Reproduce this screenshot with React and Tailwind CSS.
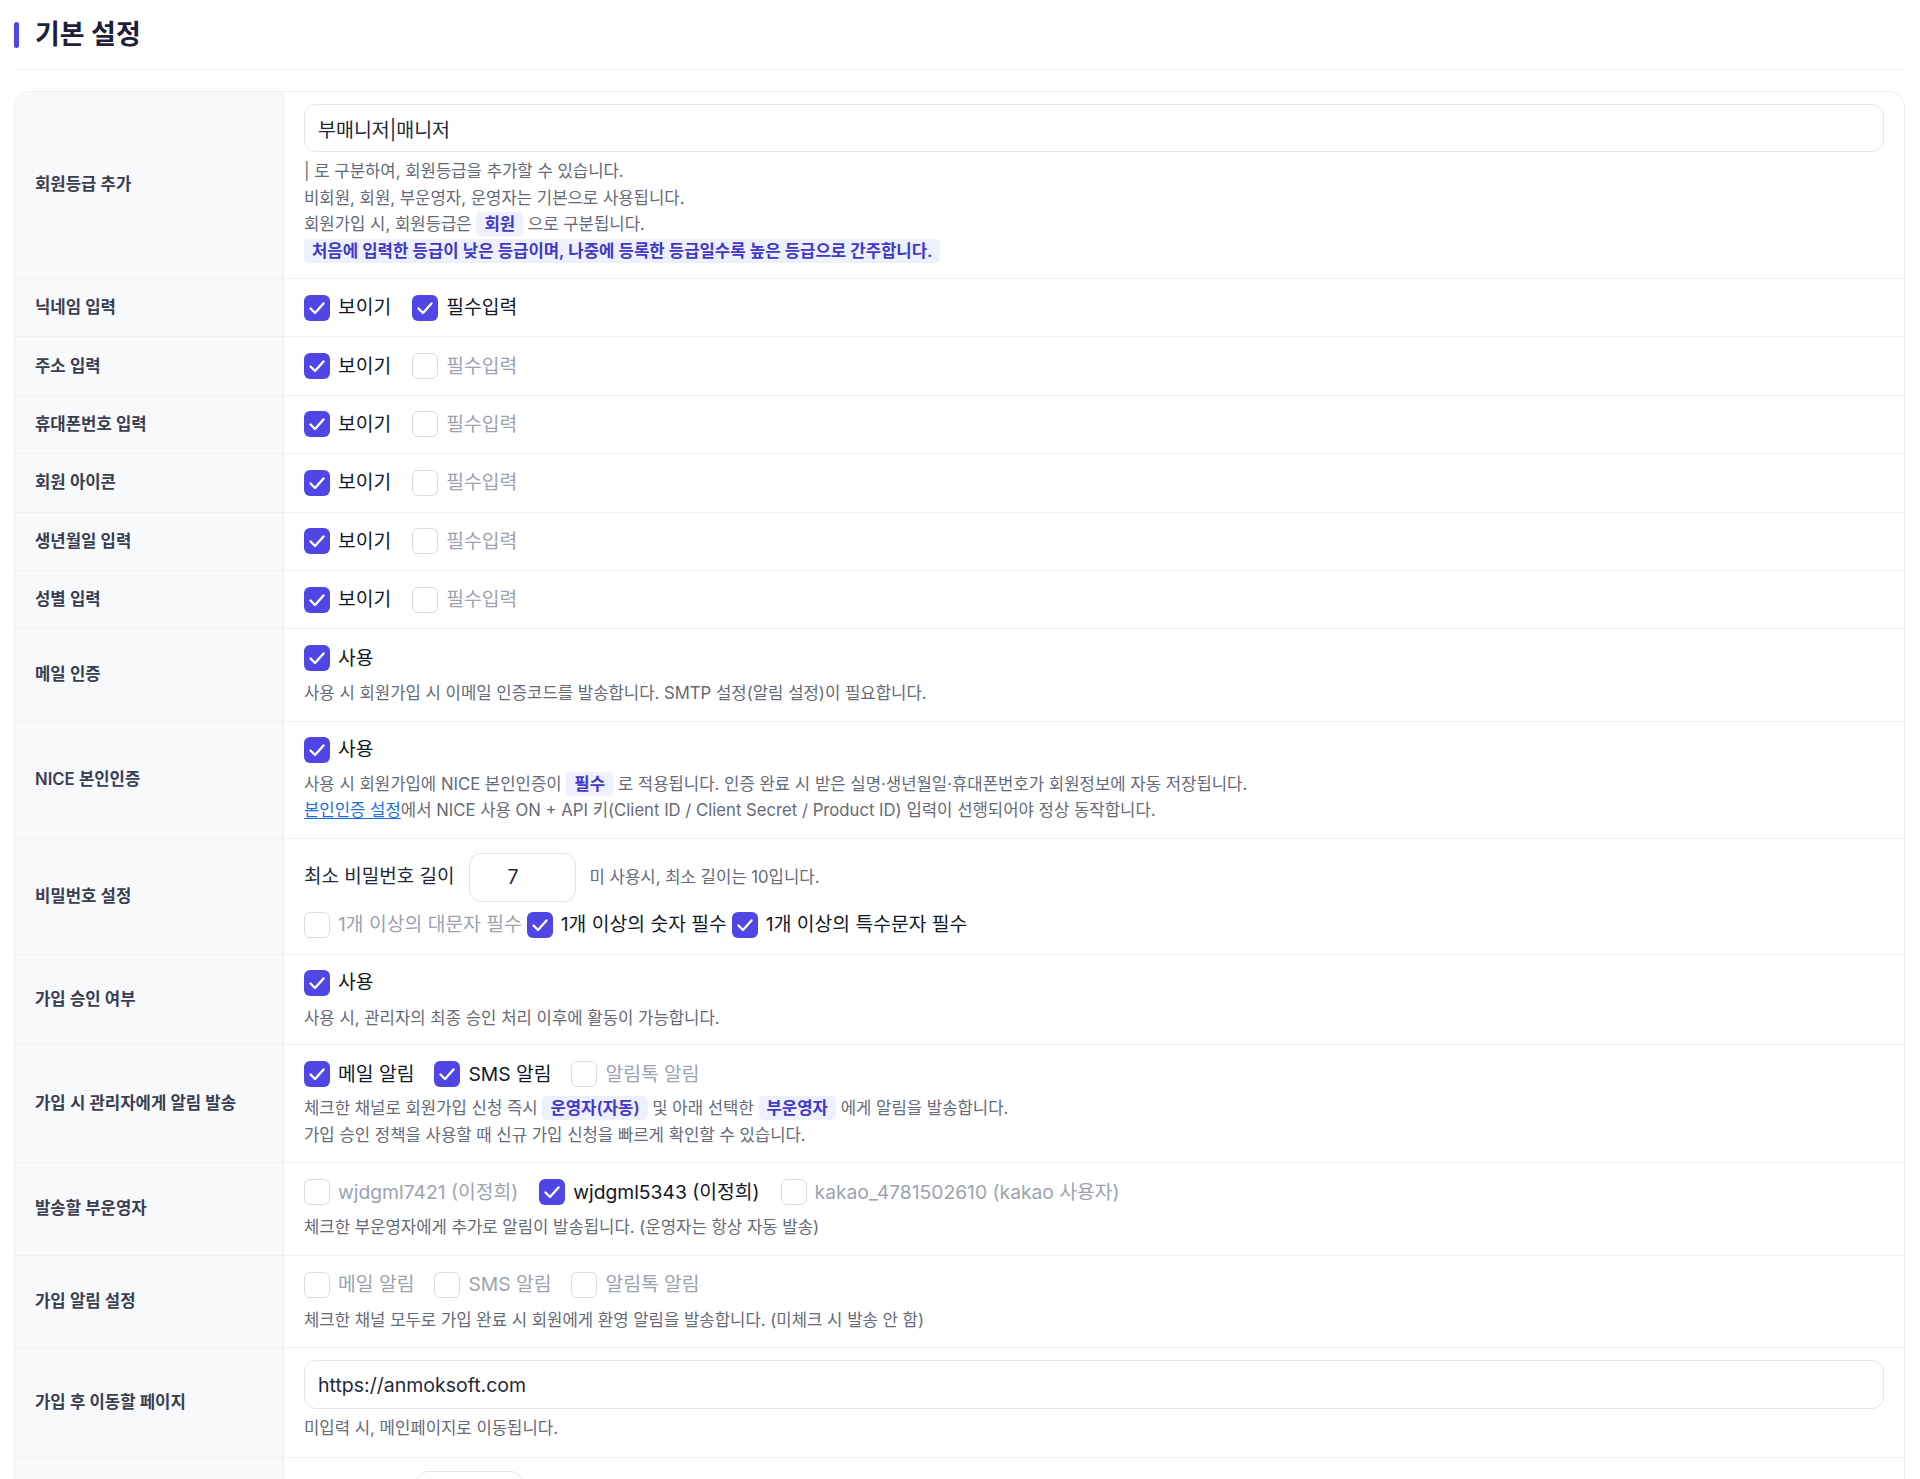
import React from "react";

function Box({ checked }) {
  if (checked) {
    return (
      <span className="flex h-[26px] w-[26px] shrink-0 items-center justify-center rounded-[6px] bg-[#4f46e5]">
        <svg viewBox="0 0 26 26" className="h-[26px] w-[26px]" fill="none" stroke="#ffffff" strokeWidth="2.4" strokeLinecap="round" strokeLinejoin="round">
          <path d="M6.5 13.5 11 18l8.5-9.5" />
        </svg>
      </span>
    );
  }
  return <span className="h-[26px] w-[26px] shrink-0 rounded-[6px] border border-[#d9dce2] bg-white" />;
}

function Check({ checked, label }) {
  return (
    <label className="flex items-center gap-2">
      <Box checked={checked} />
      <span className={checked ? "text-[19.3px] text-[#111827]" : "text-[19.3px] text-[#9ca3af]"}>{label}</span>
    </label>
  );
}

function Badge({ children }) {
  return (
    <span className="inline-block rounded-[5px] bg-[#eef0fe] px-2 font-semibold leading-[24px] text-[#3f38c8]">{children}</span>
  );
}

function Row({ label, children, contentClass }) {
  return (
    <div className="flex border-b border-[#f0f1f4]">
      <div className="flex w-[269px] shrink-0 items-center border-r border-[#f0f1f4] bg-[#f8f9fb] px-5 text-[16.7px] font-semibold text-[#393e50]">
        {label}
      </div>
      <div className={"min-w-0 flex-1 px-5 " + contentClass}>{children}</div>
    </div>
  );
}

function CheckRow({ label, items }) {
  return (
    <Row label={label} contentClass="py-[13.7px]">
      <div className="flex h-[30px] items-center gap-[21px]">
        {items.map((it) => (
          <Check key={it[0]} label={it[0]} checked={it[1]} />
        ))}
      </div>
    </Row>
  );
}

const help = "text-[16.7px] leading-[26.5px] text-[#656a76]";

export default function App() {
  return (
    <div className="min-h-screen bg-white pl-[14px] pr-[15px] font-[family-name:Inter,Noto_Sans_CJK_KR,sans-serif]">
      <div className="flex items-center gap-4 border-b border-[#eef0f3] pb-[19px] pt-5">
        <span className="h-[26px] w-[5px] rounded-full bg-[#4f46e5]" />
        <h1 className="text-[27px] font-bold leading-[30px] text-[#1e1f3b]">기본 설정</h1>
      </div>

      <div className="mt-[21px] overflow-hidden rounded-2xl border border-[#eceef2]">
        <Row label="회원등급 추가" contentClass="pt-3 pb-[14px]">
          <input
            readOnly
            defaultValue="부매니저|매니저"
            className="block h-[48px] w-full rounded-xl border border-[#e3e5e9] bg-white px-[13px] text-[19.5px] text-[#1f2937] outline-none"
          />
          <div className={"mt-[6px] " + help}>
            <p>| 로 구분하여, 회원등급을 추가할 수 있습니다.</p>
            <p>비회원, 회원, 부운영자, 운영자는 기본으로 사용됩니다.</p>
            <p>
              회원가입 시, 회원등급은 <Badge>회원</Badge> 으로 구분됩니다.
            </p>
            <p>
              <Badge>처음에 입력한 등급이 낮은 등급이며, 나중에 등록한 등급일수록 높은 등급으로 간주합니다.</Badge>
            </p>
          </div>
        </Row>

        <CheckRow label="닉네임 입력" items={[["보이기", true], ["필수입력", true]]} />
        <CheckRow label="주소 입력" items={[["보이기", true], ["필수입력", false]]} />
        <CheckRow label="휴대폰번호 입력" items={[["보이기", true], ["필수입력", false]]} />
        <CheckRow label="회원 아이콘" items={[["보이기", true], ["필수입력", false]]} />
        <CheckRow label="생년월일 입력" items={[["보이기", true], ["필수입력", false]]} />
        <CheckRow label="성별 입력" items={[["보이기", true], ["필수입력", false]]} />

        <Row label="메일 인증" contentClass="py-[14px]">
          <div className="flex h-[30px] items-center">
            <Check checked label="사용" />
          </div>
          <p className={"mt-[7px] " + help}>사용 시 회원가입 시 이메일 인증코드를 발송합니다. SMTP 설정(알림 설정)이 필요합니다.</p>
        </Row>

        <Row label="NICE 본인인증" contentClass="pt-[13px] pb-[14px]">
          <div className="flex h-[30px] items-center">
            <Check checked label="사용" />
          </div>
          <div className={"mt-[6px] " + help}>
            <p>
              사용 시 회원가입에 NICE 본인인증이 <Badge>필수</Badge> 로 적용됩니다. 인증 완료 시 받은 실명·생년월일·휴대폰번호가 회원정보에 자동 저장됩니다.
            </p>
            <p>
              <a className="text-[#1d6fe0] underline underline-offset-2">본인인증 설정</a>에서 NICE 사용 ON + API 키(Client ID / Client Secret / Product ID) 입력이 선행되어야 정상 동작합니다.
            </p>
          </div>
        </Row>

        <Row label="비밀번호 설정" contentClass="py-[14px]">
          <div className="flex items-center gap-[14px]">
            <span className="text-[19px] text-[#1f2937]">최소 비밀번호 길이</span>
            <input
              readOnly
              defaultValue="7"
              className="block h-[49px] w-[107px] rounded-xl border border-[#e3e5e9] bg-white pl-[38px] text-[19.5px] text-[#1f2937] outline-none"
            />
            <span className="text-[16.7px] text-[#656a76]">미 사용시, 최소 길이는 10입니다.</span>
          </div>
          <div className="mt-[8px] flex h-[30px] items-center gap-[5px]">
            <Check label="1개 이상의 대문자 필수" />
            <Check checked label="1개 이상의 숫자 필수" />
            <Check checked label="1개 이상의 특수문자 필수" />
          </div>
        </Row>

        <Row label="가입 승인 여부" contentClass="py-[13px]">
          <div className="flex h-[30px] items-center">
            <Check checked label="사용" />
          </div>
          <p className={"mt-[7px] " + help}>사용 시, 관리자의 최종 승인 처리 이후에 활동이 가능합니다.</p>
        </Row>

        <Row label="가입 시 관리자에게 알림 발송" contentClass="pt-[14px] pb-[14px]">
          <div className="flex h-[30px] items-center gap-[20px]">
            <Check checked label="메일 알림" />
            <Check checked label="SMS 알림" />
            <Check label="알림톡 알림" />
          </div>
          <div className={"mt-[6px] " + help}>
            <p>
              체크한 채널로 회원가입 신청 즉시 <Badge>운영자(자동)</Badge> 및 아래 선택한 <Badge>부운영자</Badge> 에게 알림을 발송합니다.
            </p>
            <p>가입 승인 정책을 사용할 때 신규 가입 신청을 빠르게 확인할 수 있습니다.</p>
          </div>
        </Row>

        <Row label="발송할 부운영자" contentClass="py-[14px]">
          <div className="flex h-[30px] items-center gap-[21px]">
            <Check label="wjdgml7421 (이정희)" />
            <Check checked label="wjdgml5343 (이정희)" />
            <Check label="kakao_4781502610 (kakao 사용자)" />
          </div>
          <p className={"mt-[7px] " + help}>체크한 부운영자에게 추가로 알림이 발송됩니다. (운영자는 항상 자동 발송)</p>
        </Row>

        <Row label="가입 알림 설정" contentClass="py-[14px]">
          <div className="flex h-[30px] items-center gap-[20px]">
            <Check label="메일 알림" />
            <Check label="SMS 알림" />
            <Check label="알림톡 알림" />
          </div>
          <p className={"mt-[7px] " + help}>체크한 채널 모두로 가입 완료 시 회원에게 환영 알림을 발송합니다. (미체크 시 발송 안 함)</p>
        </Row>

        <Row label="가입 후 이동할 페이지" contentClass="pt-3 pb-[15px]">
          <input
            readOnly
            defaultValue="https://anmoksoft.com"
            className="block h-[49px] w-full rounded-xl border border-[#e3e5e9] bg-white px-[13px] text-[19.5px] text-[#1f2937] outline-none"
          />
          <p className={"mt-[6px] " + help}>미입력 시, 메인페이지로 이동됩니다.</p>
        </Row>

        <div className="flex h-[90px]">
          <div className="w-[269px] shrink-0 border-r border-[#f0f1f4] bg-[#f8f9fb]" />
          <div className="flex-1 px-5 pt-[13px]">
            <div className="ml-[112px] h-[49px] w-[107px] rounded-xl border border-[#e3e5e9] bg-white" />
          </div>
        </div>
      </div>
    </div>
  );
}
